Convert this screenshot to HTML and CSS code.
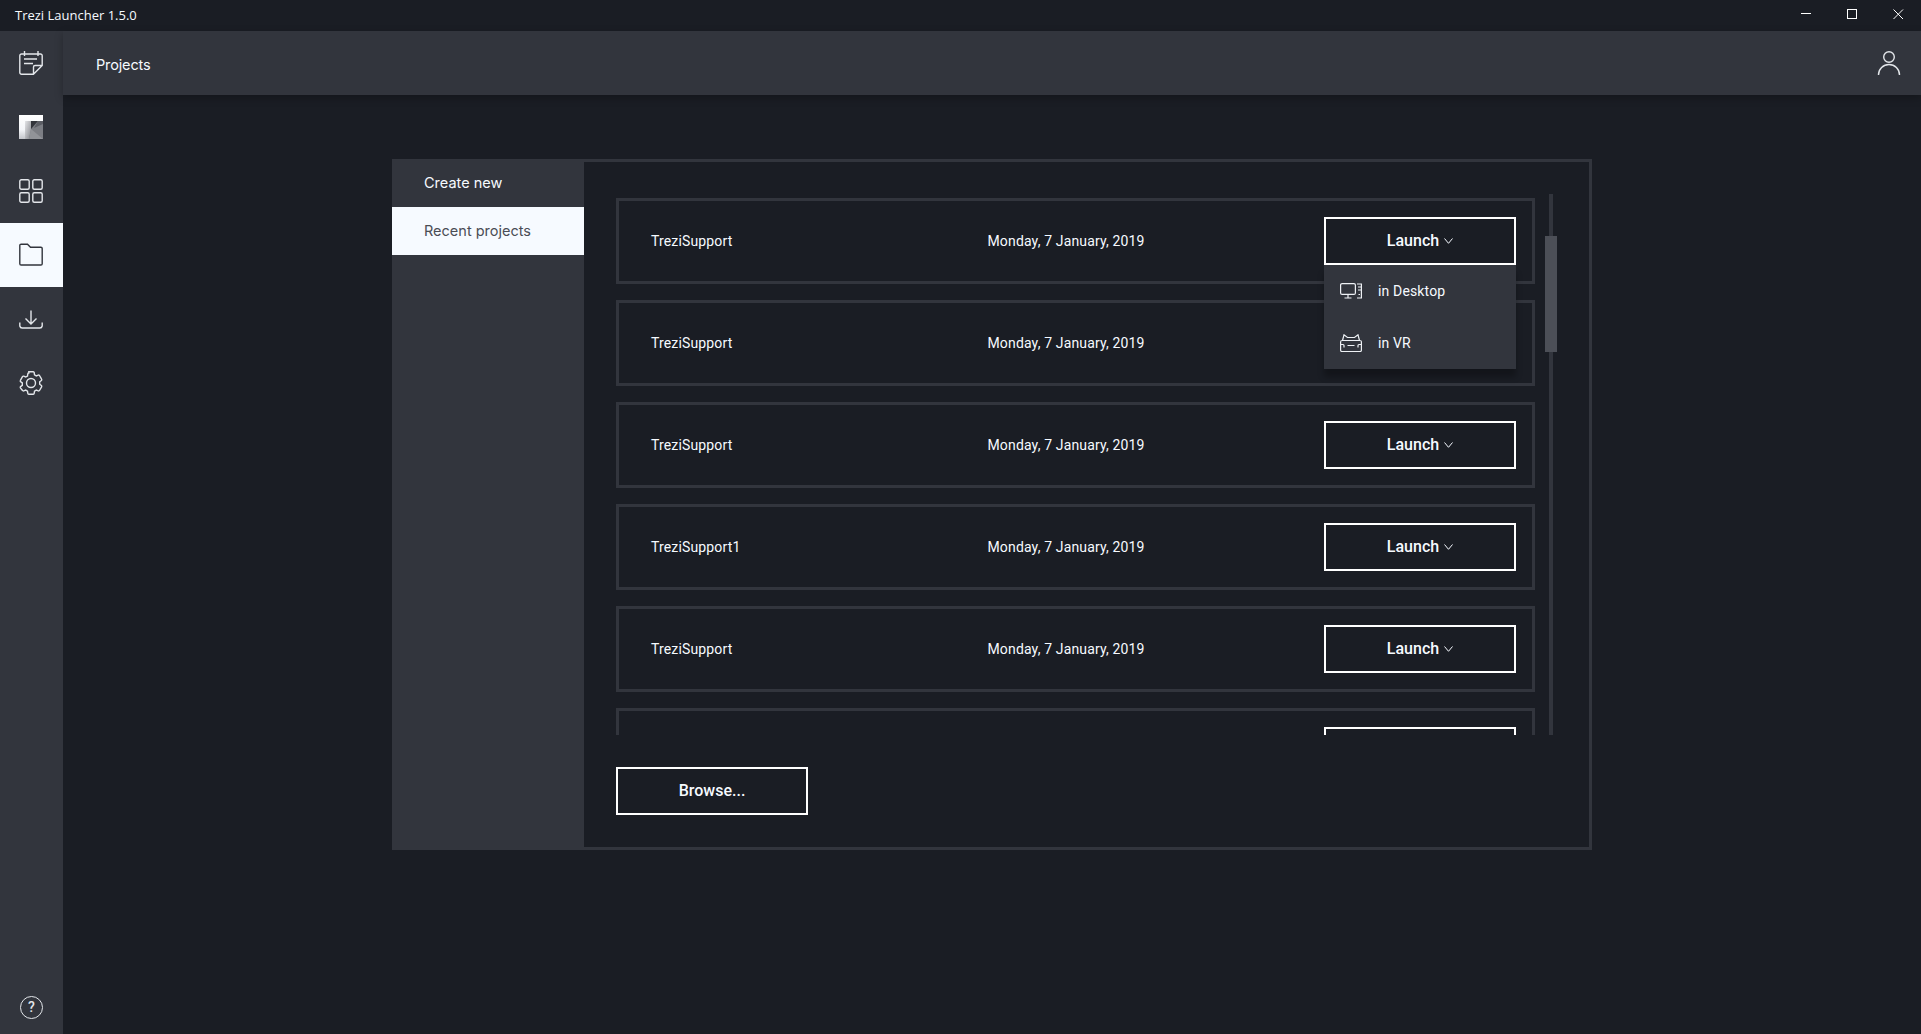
FILE: index.html
```html
<!DOCTYPE html>
<html lang="en">
<head>
<meta charset="utf-8">
<title>Trezi Launcher 1.5.0</title>
<link rel="stylesheet" href="styles.css">
</head>
<body>
<div class="app">
  <header class="titlebar">
    <span class="app-title">Trezi Launcher 1.5.0</span>
    <div class="win-controls">
      <svg class="win-btn" viewBox="0 0 46 31"><path d="M18 13.500h10" /></svg>
      <svg class="win-btn" viewBox="0 0 46 31"><rect x="18.500" y="9.500" width="9" height="9" /></svg>
      <svg class="win-btn" viewBox="0 0 46 31"><path d="M18.500 9.500l9.500 9.500M28 9.500l-9.500 9.500" /></svg>
    </div>
  </header>
  <div class="body-row">
    <nav class="sidebar">
      <a class="nav-item"><svg class="icon" viewBox="0 0 24 24"><path d="M2.500 3h19a1.700 1.700 0 0 1 1.700 1.700V14.500l-8.800 8.800H2.500a1.700 1.700 0 0 1-1.700-1.700V4.700A1.700 1.700 0 0 1 2.500 3zM5.500 0v5M19 0v5M5 8h13M5 12.500h9M23 14.500h-7a1.500 1.500 0 0 0-1.500 1.500v7.300"/></svg></a>
      <a class="nav-item"><svg class="icon-logo" viewBox="0 0 24 24"><defs><linearGradient id="lg1" x1="0" y1="0" x2="0" y2="1"><stop offset="0" stop-color="#ffffff"/><stop offset=".6" stop-color="#f4f6f9"/><stop offset="1" stop-color="#c4c6cb"/></linearGradient><linearGradient id="lg2" x1="0" y1="0" x2="1" y2="1"><stop offset="0" stop-color="#e4e5e8"/><stop offset="1" stop-color="#85878c"/></linearGradient></defs><rect width="24" height="24" fill="url(#lg1)"/><path d="M6 6h18v18H6z" fill="#7c7e84"/><path d="M6 6h6v8l-2 10H6z" fill="url(#lg2)"/><path d="M12 6h7l-7 8z" fill="#33353b"/><path d="M19 6h5v3l-9 4z" fill="#5c5e65"/><path d="M12 14l12 10H10z" fill="#919398"/></svg></a>
      <a class="nav-item"><svg class="icon" viewBox="0 0 24 24"><rect x=".8" y=".8" width="9.400" height="9.400" rx="1.500"/><rect x="13.800" y=".8" width="9.400" height="9.400" rx="1.500"/><rect x=".8" y="13.800" width="9.400" height="9.400" rx="1.500"/><rect x="13.800" y="13.800" width="9.400" height="9.400" rx="1.500"/></svg></a>
      <a class="nav-item active"><svg class="icon" viewBox="0 0 24 24"><path d="M.8 2.500a1.300 1.300 0 0 1 1.300-1.300h6.400l3 3h10.400a1.300 1.300 0 0 1 1.300 1.300v15.200a1.300 1.300 0 0 1-1.300 1.300H2.100A1.300 1.300 0 0 1 .8 20.700z"/></svg></a>
      <a class="nav-item"><svg class="icon" viewBox="0 0 24 24"><path d="M12 3.500v13.500M6.500 11.500l5.500 5.500 5.500-5.500M.8 15.500v3.500a2.500 2.500 0 0 0 2.500 2h17.400a2.500 2.500 0 0 0 2.500-2v-3.500"/></svg></a>
      <a class="nav-item"><svg class="icon" viewBox="0 0 24 24"><circle cx="12" cy="12" r="4.500"/><path d="M9.800.8h4.400a1 1 0 0 1 1 .9l.3 2.200 1.800 1 2-.8a1 1 0 0 1 1.200.4l2.100 3.700a1 1 0 0 1-.2 1.300l-1.700 1.300v2.400l1.700 1.300a1 1 0 0 1 .2 1.300l-2.100 3.700a1 1 0 0 1-1.200.4l-2-.8-1.800 1-.3 2.200a1 1 0 0 1-1 .9H9.800a1 1 0 0 1-1-.9l-.3-2.200-1.800-1-2 .8a1 1 0 0 1-1.200-.4L1.400 16.900a1 1 0 0 1 .2-1.300l1.700-1.300v-2.400L1.600 10.600a1 1 0 0 1-.2-1.300l2.100-3.700a1 1 0 0 1 1.200-.4l2 .8 1.800-1 .3-2.200a1 1 0 0 1 1-.8z"/></svg></a>
      <div class="nav-spacer"></div>
      <a class="nav-item nav-help"><span class="help-ring">?</span></a>
    </nav>
    <div class="workspace">
      <div class="pagebar">
        <span class="page-title">Projects</span>
        <svg class="user-icon" viewBox="0 0 24 24"><circle cx="12" cy="6" r="5.300"/><path d="M1.500 24a10.500 10.500 0 0 1 21 0"/></svg>
      </div>
      <main class="stage">
        <section class="panel">
          <aside class="tabs">
            <div class="tab">Create new</div>
            <div class="tab tab-active">Recent projects</div>
          </aside>
          <div class="content">
            <div class="list-wrap">
              <div class="list">
                <div class="row">
                  <span class="name">TreziSupport</span><span class="date">Monday, 7 January, 2019</span>
                  <div class="launch-wrap">
                    <button class="btn">Launch <svg class="chev" viewBox="0 0 9 6"><path d="M.5.500L4.500 5.300 8.500.5"/></svg></button>
                    <div class="menu">
                      <div class="menu-item"><svg class="menu-icon" viewBox="0 0 22 18"><rect x=".6" y="1.600" width="14.800" height="10.800" rx="1.500"/><path d="M8 12.500v3.500M4.500 16h7M17 2h4.400v14H17M18 5h3.400M18 8h3.400M18.500 12.500h1.500"/></svg><span>in Desktop</span></div>
                      <div class="menu-item"><svg class="menu-icon" viewBox="0 0 22 18"><path d="M2.500 6.500L4 .8l3.500 2.700h7L18 .8l1.500 5.700M2 6.500h18a1.400 1.400 0 0 1 1.400 1.400v8.300a1.400 1.400 0 0 1-1.400 1.300H2a1.400 1.400 0 0 1-1.400-1.300V7.900A1.400 1.400 0 0 1 2 6.500zM7.500 11.500h7M.6 10.500h2.400a1 1 0 0 1 1 1v2M21.400 10.500H19a1 1 0 0 0-1 1v2"/></svg><span>in VR</span></div>
                    </div>
                  </div>
                </div>
                <div class="row"><span class="name">TreziSupport</span><span class="date">Monday, 7 January, 2019</span><div class="launch-wrap launch-hidden"></div></div>
                <div class="row"><span class="name">TreziSupport</span><span class="date">Monday, 7 January, 2019</span><div class="launch-wrap"><button class="btn">Launch <svg class="chev" viewBox="0 0 9 6"><path d="M.5.500L4.500 5.300 8.500.5"/></svg></button></div></div>
                <div class="row"><span class="name">TreziSupport1</span><span class="date">Monday, 7 January, 2019</span><div class="launch-wrap"><button class="btn">Launch <svg class="chev" viewBox="0 0 9 6"><path d="M.5.500L4.500 5.300 8.500.5"/></svg></button></div></div>
                <div class="row"><span class="name">TreziSupport</span><span class="date">Monday, 7 January, 2019</span><div class="launch-wrap"><button class="btn">Launch <svg class="chev" viewBox="0 0 9 6"><path d="M.5.500L4.500 5.300 8.500.5"/></svg></button></div></div>
                <div class="row row-clipped"><span class="name"></span><span class="date"></span><div class="launch-wrap"><button class="btn" aria-label="Launch"></button></div></div>
              </div>
              <div class="scrollbar"><div class="thumb"></div></div>
            </div>
            <button class="btn btn-browse">Browse...</button>
          </div>
        </section>
      </main>
    </div>
  </div>
</div>
</body>
</html>
```
FILE: styles.css
```css
* { box-sizing: border-box; }
html, body { margin: 0; padding: 0; height: 100%; overflow: hidden; background: #1a1d24; }
body { color: #f6faff; font-family: Roboto, "Liberation Sans", sans-serif; }
.app { display: flex; flex-direction: column; width: 1921px; height: 1034px; }

.titlebar { display: flex; align-items: center; justify-content: space-between; height: 31px; flex: none; background: #1a1d24; padding-left: 15px; }
.app-title { font: 400 13px "Open Sans", "Noto Sans", sans-serif; color: #f6faff; position: relative; top: -1px; }
.win-controls { display: flex; }
.win-btn { width: 46px; height: 31px; fill: none; stroke: #fff; stroke-width: 1; display: block; }

.body-row { display: flex; flex: 1; min-height: 0; }
.sidebar { width: 63px; flex: none; background: #32353d; display: flex; flex-direction: column; }
.nav-item { height: 64px; flex: none; display: flex; align-items: center; justify-content: center; padding-right: 1px; }
.nav-item.active { background: #f6faff; }
.nav-spacer { flex: 1; }
.nav-help { height: 64px; padding: 10px 0 0; }
.icon { width: 24px; height: 24px; fill: none; stroke: #e3e6ea; stroke-width: 1.400; display: block; overflow: visible; }
.active .icon { stroke: #32353d; }
.icon-logo { width: 24px; height: 24px; display: block; }
.help-ring { width: 23px; height: 23px; border: 1.400px solid #e3e6ea; border-radius: 50%; display: flex; align-items: center; justify-content: center; font: 500 14px Roboto, sans-serif; color: #e3e6ea; }

.workspace { flex: 1; display: flex; flex-direction: column; min-width: 0; }
.pagebar { height: 64px; flex: none; background: #32353d; display: flex; align-items: center; justify-content: space-between; padding: 0 20px 0 33px; box-shadow: 0 3px 8px rgba(0,0,0,.25); position: relative; z-index: 1; }
.page-title { font: 400 14.500px Inter, sans-serif; letter-spacing: -.15px; color: #f6faff; position: relative; top: 1px; }
.user-icon { width: 24px; height: 24px; fill: none; stroke: #e3e6ea; stroke-width: 1.400; display: block; }

.stage { flex: 1; display: flex; justify-content: center; align-items: flex-start; padding-top: 64px; }
.panel { width: 1200px; height: 691px; display: flex; }
.tabs { width: 192px; flex: none; background: #32353d; }
.tab { height: 48px; display: flex; align-items: center; padding: 0 0 2px 32px; font: 400 14.500px Inter, sans-serif; letter-spacing: 0; color: #f6faff; }
.tab-active { background: #f6faff; color: #4a4d55; }

.content { flex: 1; border: 3px solid #32353d; border-left: 0; padding: 36px 0 32px 32px; display: flex; flex-direction: column; gap: 32px; }
.list-wrap { display: flex; height: 537px; gap: 10px; flex: none; }
.list { width: 919px; flex: none; overflow: hidden; display: flex; flex-direction: column; gap: 16px; }
.row { height: 86px; flex: none; border: 3px solid #32353d; padding: 16px 16px 16px 32px; display: flex; align-items: center; font-size: 14px; letter-spacing: .15px; color: #f6faff; }
.name { width: 336.500px; flex: none; }
.date { flex: 1; }
.launch-wrap { position: relative; flex: none; }
.launch-hidden { width: 192px; height: 48px; }
.btn { width: 192px; height: 48px; border: 2px solid #fff; background: #1a1d24; color: #f6faff; font: 500 16px Roboto, sans-serif; display: flex; align-items: center; justify-content: center; gap: 5px; padding: 0 0 2px; }
.chev { width: 9px; height: 6px; fill: none; stroke: #f6faff; stroke-width: 1; position: relative; top: 1px; }
.btn-browse { flex: none; }

.menu { position: absolute; left: 0; top: 48px; width: 192px; height: 104px; background: #32353d; box-shadow: 0 8px 6px rgba(0,0,0,.28); z-index: 5; }
.menu-item { height: 52px; display: flex; align-items: center; padding-left: 16px; gap: 16px; font-size: 14px; }
.menu-icon { width: 22px; height: 18px; fill: none; stroke: #eef1f5; stroke-width: 1.200; flex: none; }

.scrollbar { width: 12px; flex: none; position: relative; display: flex; justify-content: center; margin-top: -4px; }
.scrollbar::before { content: ""; width: 4px; background: #32353d; }
.thumb { position: absolute; left: 0; top: 42px; width: 12px; height: 116px; background: #4c4f57; }
```
